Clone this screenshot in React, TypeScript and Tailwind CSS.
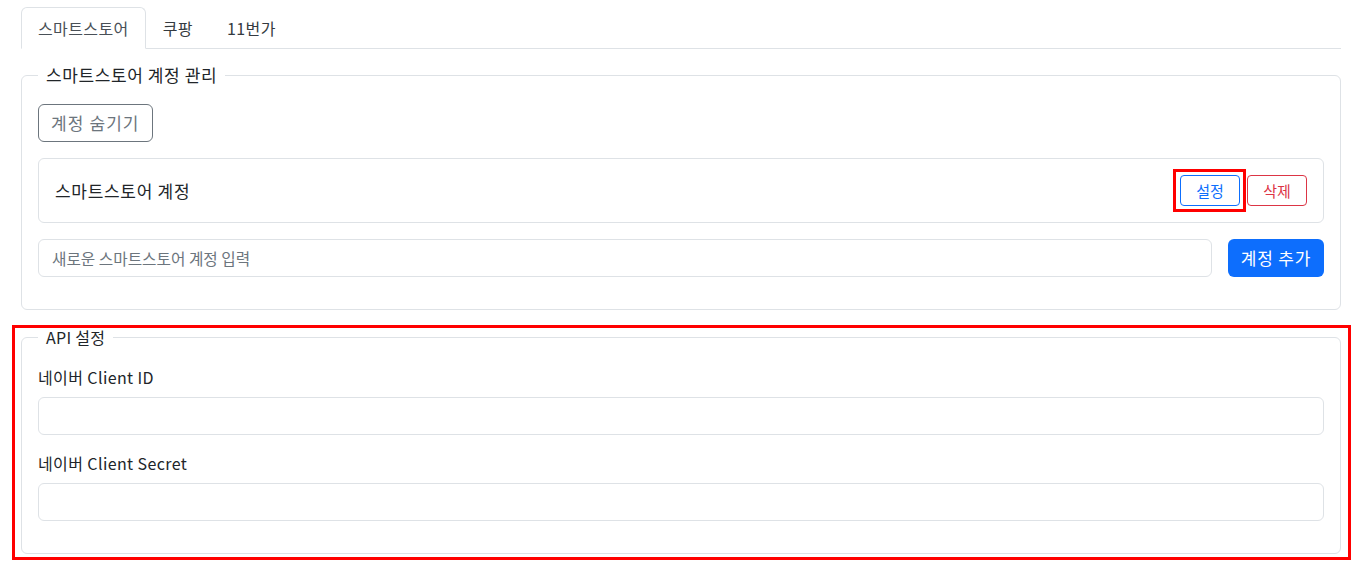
import { useState } from "react";

const font = {
  fontFamily: '"Noto Sans CJK KR", "Noto Sans", sans-serif',
};

export default function App() {
  const [activeTab, setActiveTab] = useState(0);
  const tabs = ["스마트스토어", "쿠팡", "11번가"];

  return (
    <div
      style={font}
      className="relative bg-white text-[#212529] text-[16px] leading-6 pt-[7px] pl-[21px] w-[1341px] h-[564px]"
    >
      {/* Tabs */}
      <div className="flex border-b border-[#dee2e6]">
        {tabs.map((tab, index) => (
          <button
            key={index}
            onClick={() => setActiveTab(index)}
            className={`px-4 py-2 -mb-px border rounded-t-md leading-6 tracking-[0.4px] ${
              activeTab === index
                ? "border-[#dee2e6] border-b-white bg-white text-[#495057]"
                : "border-transparent text-[#343a40]"
            }`}
          >
            {tab}
          </button>
        ))}
      </div>

      {/* 계정 관리 */}
      <fieldset className="mt-[14px] border border-[#dee2e6] rounded-md px-4 pt-[17px] pb-8">
        <legend className="px-2 leading-6 text-[17px] tracking-[0.6px]">스마트스토어 계정 관리</legend>
        <button className="h-[38px] px-3 border border-[#6c757d] rounded-md text-[#6c757d] text-[17px] tracking-[1.1px]">
          계정 숨기기
        </button>

        <div className="mt-4 h-[65px] border border-[#dee2e6] rounded-md flex items-center justify-between pl-4 pr-4">
          <div className="text-[17px] tracking-[0.7px]">스마트스토어 계정</div>
          <div className="flex gap-[7px]">
            <span className="relative">
              <button className="w-[60px] h-[31px] border border-[#0d6efd] rounded text-[15px] text-[#0d6efd]">
                설정
              </button>
              <span className="absolute -left-[7px] -right-[6px] -top-[6px] -bottom-[6px] border-[3px] border-[#ff0000] pointer-events-none" />
            </span>
            <button className="w-[60px] h-[31px] border border-[#dc3545] rounded text-[15px] text-[#dc3545]">
              삭제
            </button>
          </div>
        </div>

        <div className="mt-4 flex gap-4">
          <input
            placeholder="새로운 스마트스토어 계정 입력"
            className="flex-1 h-[38px] px-[13px] border border-[#dee2e6] rounded-md outline-none text-[15.7px] placeholder:text-[#6c757d]"
          />
          <button className="w-[96px] h-[38px] rounded-md bg-[#0d6efd] text-white text-[17px] tracking-[0.8px]">
            계정 추가
          </button>
        </div>
      </fieldset>

      {/* API 설정 */}
      <div className="relative mt-[15px]">
        <fieldset className="border border-[#dee2e6] rounded-md px-4 pt-4 pb-4">
          <legend className="px-2 leading-6 tracking-[0.3px]">API 설정</legend>
          <div className="mb-4">
            <label className="block mb-2 tracking-[0.4px]">네이버 Client ID</label>
            <input className="w-full h-[38px] px-3 border border-[#dee2e6] rounded-md outline-none" />
          </div>
          <div className="mb-4">
            <label className="block mb-2 tracking-[0.4px]">네이버 Client Secret</label>
            <input className="w-full h-[38px] px-3 border border-[#dee2e6] rounded-md outline-none" />
          </div>
        </fieldset>
        <span className="absolute -left-[9px] -right-[10px] top-0 -bottom-[6px] border-[3px] border-[#ff0000] pointer-events-none" />
      </div>
    </div>
  );
}
